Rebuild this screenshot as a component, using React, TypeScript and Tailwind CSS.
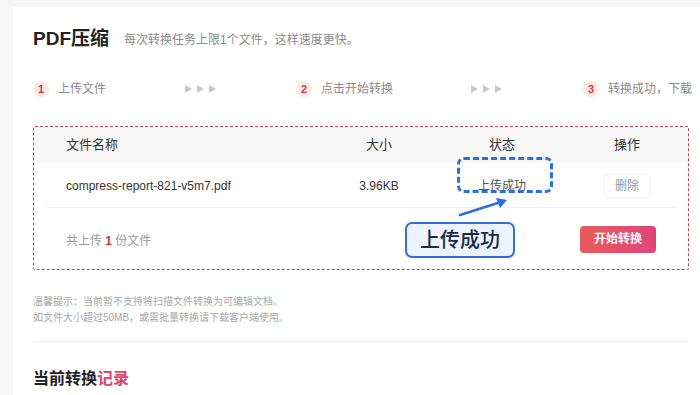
const font = { fontFamily: '"Liberation Sans", "Noto Sans CJK SC", sans-serif' };

const Arrows = () => (
  <div className="flex items-center gap-[5px]">
    {[0, 1, 2].map((i) => (
      <svg key={i} width="7" height="8" viewBox="0 0 7 8">
        <path d="M0 0 L7 4 L0 8 Z" fill="#c8c8c8" />
      </svg>
    ))}
  </div>
);

const Step = ({ n, label }: { n: number; label: string }) => (
  <div className="flex items-center gap-[9px]">
    <span className="w-[16px] h-[16px] rounded-full bg-[#fbeaea] text-[#d0383c] text-[11px] font-bold flex items-center justify-center">
      {n}
    </span>
    <span className="text-[12px] text-[#8a8a8a] whitespace-nowrap">{label}</span>
  </div>
);

export default function App() {
  return (
    <div className="relative w-[700px] h-[395px] overflow-hidden bg-[#f7f7f7] pl-[13px] pt-[7px]" style={font}>
      <div className="bg-white h-full pl-[20px] pr-[11px]">
        {/* title */}
        <div className="flex items-center gap-[15px] pt-[12px] h-[52px]">
          <h1 className="text-[19px] font-bold text-[#222]">PDF压缩</h1>
          <span className="text-[12px] text-[#8a8a8a] pt-[2px]">每次转换任务上限1个文件，这样速度更快。</span>
        </div>

        {/* steps */}
        <div className="flex items-center h-[20px] mt-[20px] whitespace-nowrap">
          <Step n={1} label="上传文件" />
          <div className="ml-[79px]"><Arrows /></div>
          <div className="ml-[80px]"><Step n={2} label="点击开始转换" /></div>
          <div className="ml-[78px]"><Arrows /></div>
          <div className="ml-[81px]"><Step n={3} label="转换成功，下载" /></div>
        </div>

        {/* upload table */}
        <div className="mt-[27px] w-[656px] h-[144px] border border-dashed border-[#c8454f] rounded-[2px]">
          <div className="grid grid-cols-[286px_118px_128px_1fr] h-[36px] items-center bg-[#f8f8f8] text-[13px] text-[#333]">
            <span className="pl-[32px]">文件名称</span>
            <span className="text-center">大小</span>
            <span className="text-center">状态</span>
            <span className="text-center">操作</span>
          </div>
          <div className="mx-[12px] border-b border-[#f0f0f0]">
            <div className="grid grid-cols-[274px_118px_128px_1fr] h-[44px] items-center text-[12px] text-[#333] -mr-[12px] pt-[2px]">
              <span className="pl-[20px]">compress-report-821-v5m7.pdf</span>
              <span className="text-center">3.96KB</span>
              <span className="text-center text-[#555]">上传成功</span>
              <div className="flex justify-center">
                <button className="w-[48px] h-[24px] border border-[#f3f3f3] rounded-[3px] text-[12px] text-[#999] bg-white">
                  删除
                </button>
              </div>
            </div>
          </div>
          <div className="flex items-center justify-between px-[32px] h-[62px]">
            <span className="text-[12px] text-[#999] pt-[3px]">
              共上传 <b className="text-[#c0392b]">1</b> 份文件
            </span>
            <button className="w-[76px] h-[27px] rounded-[4px] bg-gradient-to-r from-[#e85a5a] to-[#e0457b] text-white text-[12px] font-bold">
              开始转换
            </button>
          </div>
        </div>

        {/* tips */}
        <div className="mt-[24px] text-[10px] leading-[16px] text-[#a8a8a8]">
          <p>温馨提示：当前暂不支持将扫描文件转换为可编辑文档。</p>
          <p>如文件大小超过50MB，或需批量转换请下载客户端使用。</p>
        </div>

        <div className="mt-[14px] w-[656px] h-[3px] bg-[#f8f8f8]" />

        <h2 className="mt-[24px] text-[16px] font-bold text-[#222]">
          当前转换<span className="text-[#e0456e]">记录</span>
        </h2>
      </div>

      {/* annotation overlay */}
      <div className="absolute left-[457px] top-[157px] w-[96px] h-[36px] border-[3px] border-dashed border-[#2d6ee0] rounded-[7px]" />
      <svg className="absolute left-[455px] top-[193px]" width="60" height="28" viewBox="0 0 60 28">
        <path d="M5 22 L46 9" stroke="#2d6ee0" strokeWidth="2.5" strokeLinecap="round" />
        <path d="M52 7 L41 5 L45 15 Z" fill="#2d6ee0" />
      </svg>
      <div className="absolute left-[405px] top-[222px] w-[110px] h-[36px] border-2 border-[#2f6fe0] rounded-[7px] bg-[#eef4ff] flex items-center justify-center text-[20px] font-medium text-[#1c2a44]">
        上传成功
      </div>
    </div>
  );
}
